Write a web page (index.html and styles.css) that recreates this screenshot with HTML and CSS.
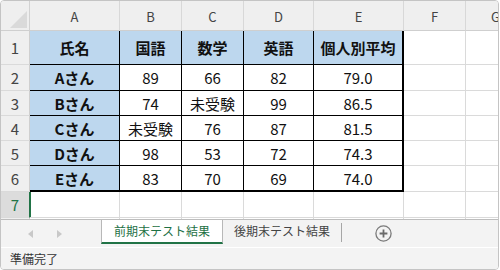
FILE: index.html
```html
<!DOCTYPE html>
<html lang="ja">
<head>
<meta charset="utf-8">
<link rel="stylesheet" href="styles.css">
</head>
<body>
<div class="window">
  <div class="sheet">
    <div class="grid">
      <div class="corner"><svg width="17" height="17" viewBox="0 0 17 17"><polygon points="0,17 17,17 17,0" fill="#dadada"/></svg></div>
      <div class="ch">A</div><div class="ch">B</div><div class="ch">C</div><div class="ch">D</div><div class="ch">E</div><div class="ch">F</div><div class="ch last">G</div>

      <div class="rh">1</div>
      <div class="c t hd">氏名</div><div class="c t hd">国語</div><div class="c t hd">数学</div><div class="c t hd">英語</div><div class="c t hd e">個人別平均</div><div class="c"></div><div class="c"></div>

      <div class="rh">2</div>
      <div class="c t hd">Aさん</div><div class="c t">89</div><div class="c t">66</div><div class="c t">82</div><div class="c t e">79.0</div><div class="c"></div><div class="c"></div>

      <div class="rh">3</div>
      <div class="c t hd">Bさん</div><div class="c t">74</div><div class="c t">未受験</div><div class="c t">99</div><div class="c t e">86.5</div><div class="c"></div><div class="c"></div>

      <div class="rh">4</div>
      <div class="c t hd">Cさん</div><div class="c t">未受験</div><div class="c t">76</div><div class="c t">87</div><div class="c t e">81.5</div><div class="c"></div><div class="c"></div>

      <div class="rh">5</div>
      <div class="c t hd">Dさん</div><div class="c t">98</div><div class="c t">53</div><div class="c t">72</div><div class="c t e">74.3</div><div class="c"></div><div class="c"></div>

      <div class="rh">6</div>
      <div class="c t hd b">Eさん</div><div class="c t b">83</div><div class="c t b">70</div><div class="c t b">69</div><div class="c t e b">74.0</div><div class="c"></div><div class="c"></div>

      <div class="rh sel">7</div>
      <div class="c active"></div><div class="c"></div><div class="c"></div><div class="c"></div><div class="c"></div><div class="c"></div><div class="c"></div>

      <div class="rh"></div>
      <div class="c"></div><div class="c"></div><div class="c"></div><div class="c"></div><div class="c"></div><div class="c"></div><div class="c"></div>
    </div>
  </div>
  <div class="tabbar">
    <div class="arrows">
      <svg class="arr" width="5" height="8" viewBox="0 0 5 8"><polygon points="5,0 5,8 0,4" fill="#c8c8c8"/></svg>
      <svg class="arr" width="5" height="8" viewBox="0 0 5 8"><polygon points="0,0 0,8 5,4" fill="#c8c8c8"/></svg>
    </div>
    <div class="tab active-tab">前期末テスト結果</div>
    <div class="tab">後期末テスト結果</div>
    <div class="sep"></div>
    <svg class="add" width="17" height="17" viewBox="0 0 17 17">
      <circle cx="8.5" cy="8.5" r="7.6" fill="none" stroke="#7a7a7a" stroke-width="1.3"/>
      <path d="M8.5 4.6v7.8M4.6 8.5h7.8" stroke="#6a6a6a" stroke-width="1.8"/>
    </svg>
  </div>
  <div class="status">準備完了</div>
</div>
</body>
</html>
```
FILE: styles.css
```css
* { box-sizing: border-box; }
html, body { margin: 0; padding: 0; background: #fff; }
body {
  font-family: "Noto Sans CJK JP", "Noto Sans", sans-serif;
  width: 500px;
  height: 270px;
  overflow: hidden;
}
.window {
  width: 499px;
  height: 270px;
  border: 1px solid #c4c4c4;
  border-radius: 4px;
  overflow: hidden;
  display: flex;
  flex-direction: column;
  background: #fff;
}
.sheet {
  height: 218px;
  overflow: hidden;
  flex: none;
}
.grid {
  display: grid;
  grid-template-columns: 29px 90px 62px 62px 70px 90px 62px 1fr;
  grid-template-rows: 30px 34px 26px 25px 25px 25px 26px 26px 26px;
}
.corner {
  background: #efefef;
  border-right: 1px solid #d2d2d2;
  border-bottom: 1px solid #cfcfcf;
  display: flex;
  align-items: flex-end;
  justify-content: flex-end;
  padding: 0 2px 2px 0;
}
.corner svg { display: block; }
.ch {
  background: #efefef;
  border-right: 1px solid #d8d8d8;
  border-bottom: 1px solid #cfcfcf;
  color: #444;
  font-size: 13px;
  display: flex;
  align-items: center;
  justify-content: center;
  padding-top: 1px;
}
.ch.last { border-right: none; justify-content: flex-start; padding-left: 25px; }
.rh {
  background: #efefef;
  border-right: 1px solid #cfcfcf;
  border-bottom: 1px solid #dadada;
  color: #444;
  font-size: 15px;
  display: flex;
  align-items: center;
  justify-content: center;
}
.rh.sel {
  background: #dcdcdc;
  color: #217346;
  border-right: 1px solid #217346;
}
.c {
  border-right: 1px solid #dadada;
  border-bottom: 1px solid #dadada;
  font-size: 15px;
  color: #111;
  display: flex;
  align-items: center;
  justify-content: center;
  white-space: nowrap;
}
.c.t {
  border-right-color: #000;
  border-bottom-color: #000;
}
.c.e { border-right-width: 2px; }
.c.b { border-bottom-width: 2px; }
.c.hd {
  background: #bdd7ee;
  font-weight: bold;
  color: #111;
}
.c.active { box-shadow: inset 1px 0 0 #217346; }

.tabbar {
  height: 29px;
  flex: none;
  background: #f3f3f3;
  border-top: 1px solid #bdbdbd;
  border-bottom: 1px solid #fff;
  display: flex;
  align-items: flex-start;
}
.arrows {
  width: 100px;
  height: 27px;
  display: flex;
  align-items: center;
  padding-left: 27px;
  gap: 24px;
}
.arr { display: block; }
.tab {
  height: 24px;
  font-size: 12px;
  line-height: 22px;
  color: #444;
  padding: 0 11px;
  white-space: nowrap;
}
.active-tab {
  background: #fff;
  color: #1e7145;
  border-left: 1px solid #b8b8b8;
  border-right: 1px solid #b8b8b8;
  border-bottom: 2px solid #217346;
  padding: 0 12px;
}
.sep {
  width: 1px;
  height: 19px;
  margin-top: 3px;
  background: #a6a6a6;
}
.add {
  display: block;
  margin-left: 33px;
  margin-top: 5px;
}
.status {
  flex: 1;
  background: #f3f3f3;
  font-size: 12px;
  color: #333;
  padding-left: 9px;
  display: flex;
  align-items: center;
}
```
